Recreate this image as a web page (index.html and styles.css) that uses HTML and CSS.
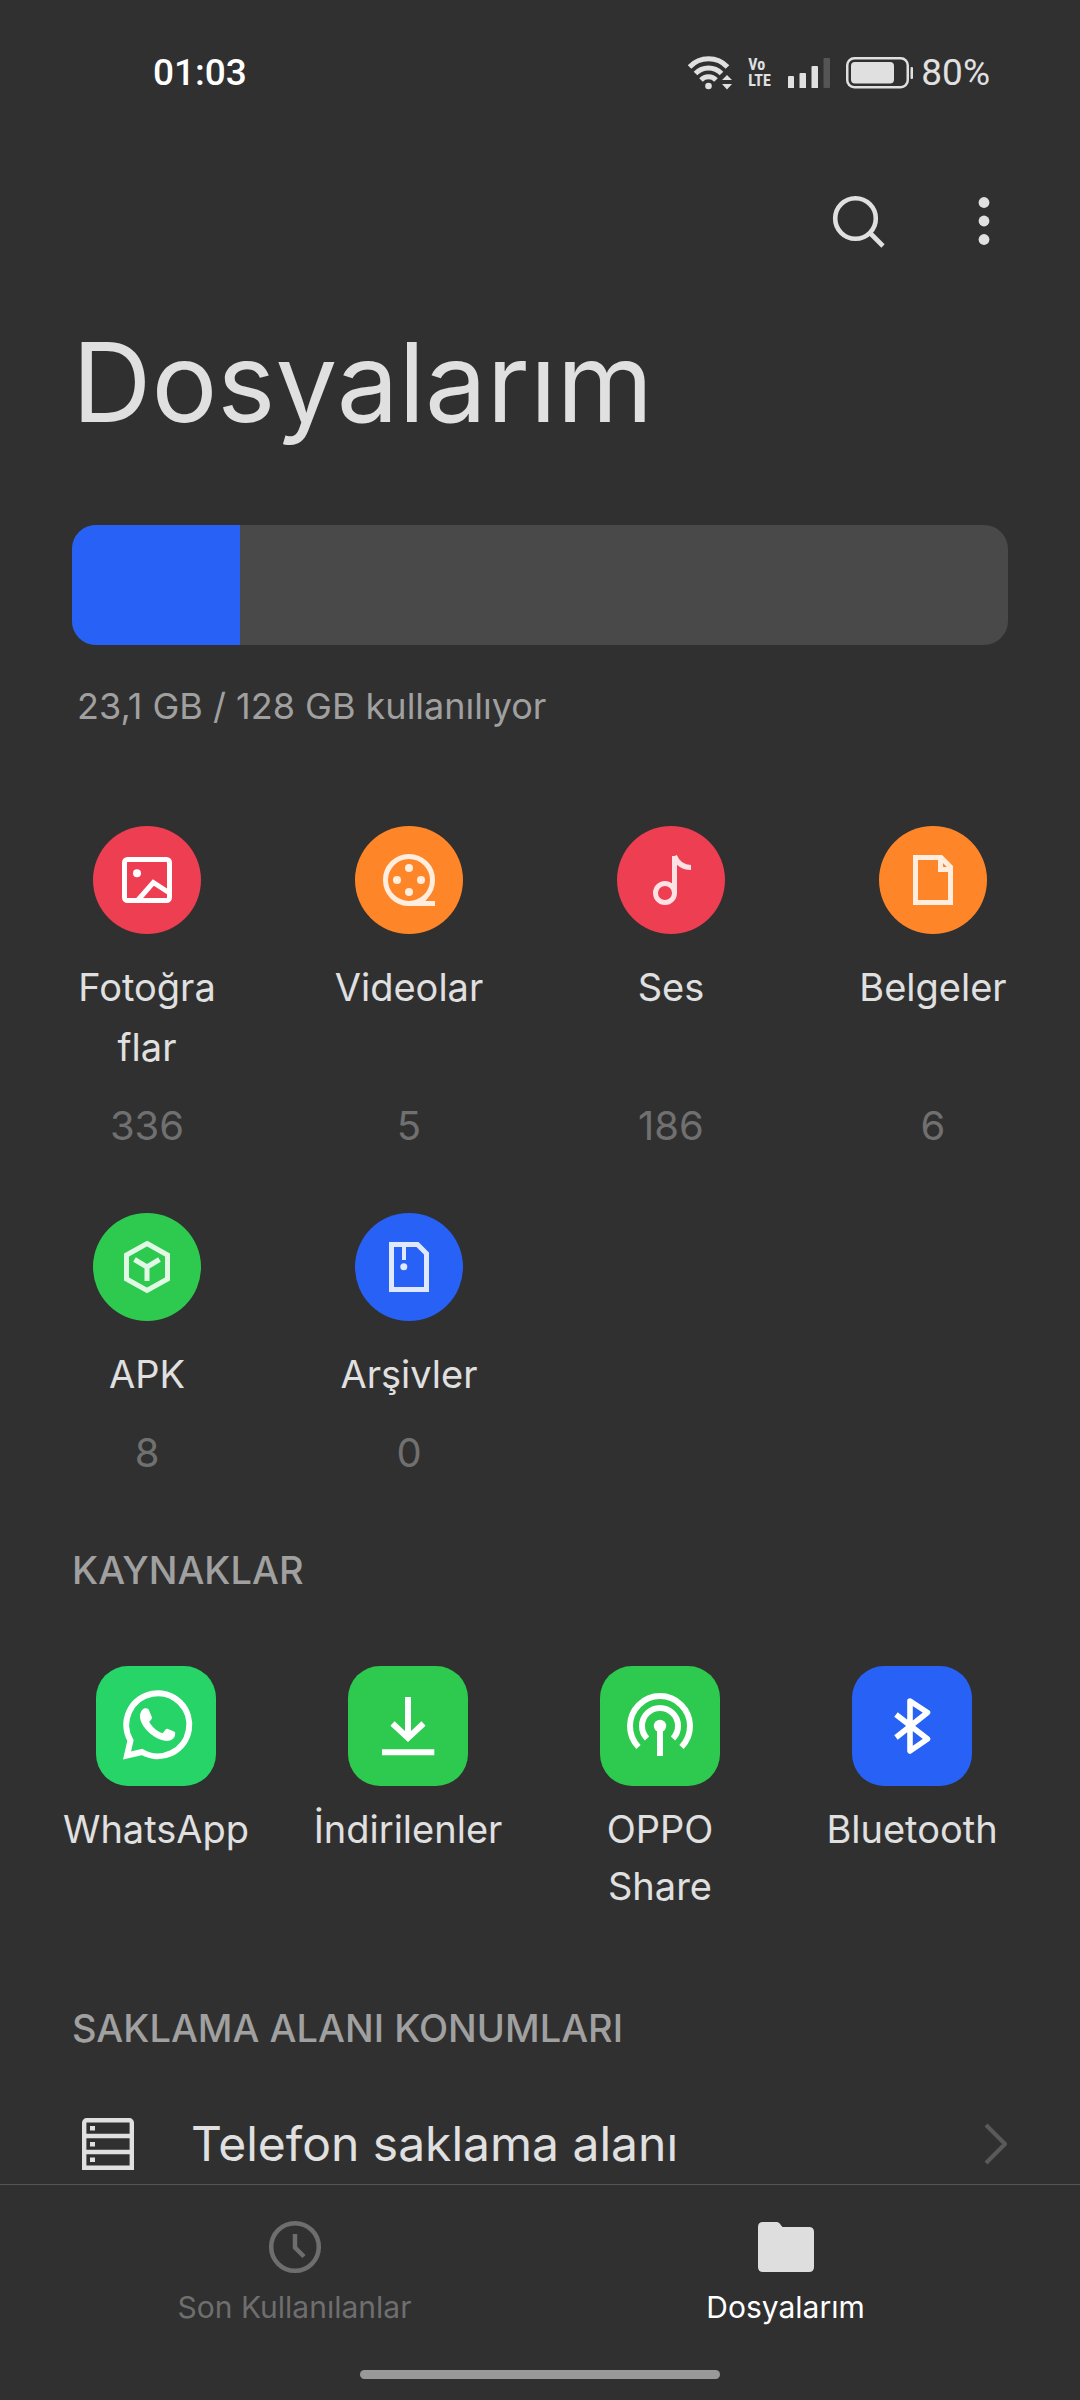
FILE: index.html
```html
<!DOCTYPE html>
<html lang="tr">
<head>
  <meta charset="utf-8">
  <meta name="viewport" content="width=device-width, initial-scale=1">
  <title>Dosyalarım</title>
  <link rel="stylesheet" href="styles.css">
</head>
<body>
  <header class="status">
    <time class="status-time">01:03</time>
    <div class="status-icons">
      <svg class="wifi" width="45" height="36" viewBox="0 0 45 36" aria-hidden="true">
        <g fill="none" stroke="currentColor" stroke-width="5">
          <path d="M1.5 12A26 26 0 0 1 39.5 12"/>
          <path d="M7.5 18.5A18 18 0 0 1 33.5 18.5"/>
          <path d="M13 25A10.500 10.500 0 0 1 28 25"/>
        </g>
        <circle cx="20.500" cy="31" r="3.300" fill="currentColor"/>
        <path fill="currentColor" d="M34 25L39 20L44 25ZM34 29H44L39 34.500Z"/>
      </svg>
      <span class="volte"><span>Vo</span><span>LTE</span></span>
      <svg class="signal" width="43" height="30" viewBox="0 0 43 30" aria-hidden="true">
        <path fill="currentColor" d="M1 19a1 1 0 0 1 1-1h4a1 1 0 0 1 1 1v11H1zM12.500 16a1 1 0 0 1 1-1h4.500a1 1 0 0 1 1 1v14h-6.500zM24.500 9a1 1 0 0 1 1-1h4.500a1 1 0 0 1 1 1v21h-6.500z"/>
        <rect x="36.500" width="6.500" height="30" rx="1" fill="#555"/>
      </svg>
      <svg class="battery" width="68" height="32" viewBox="0 0 68 32" aria-hidden="true">
        <rect x="1.250" y="1.250" width="60.500" height="29" rx="7" fill="none" stroke="currentColor" stroke-width="2.500"/>
        <rect x="5" y="5" width="43" height="21.500" rx="4" fill="currentColor"/>
        <rect x="64.500" y="10" width="2.500" height="12" rx="1" fill="currentColor"/>
      </svg>
      <span class="status-level">80%</span>
    </div>
  </header>

  <div class="toolbar">
    <button class="tool" type="button" aria-label="Ara">
      <svg width="56" height="56" viewBox="0 0 56 56" aria-hidden="true">
        <g fill="none" stroke="currentColor" stroke-width="4.600">
          <circle cx="25.500" cy="25.500" r="20.300"/>
          <path d="M39.500 39.500L53 53"/>
        </g>
      </svg>
    </button>
    <button class="tool" type="button" aria-label="Diğer seçenekler">
      <svg width="56" height="56" viewBox="0 0 56 56" fill="currentColor" aria-hidden="true">
        <circle cx="28" cy="9.500" r="5.400"/><circle cx="28" cy="28" r="5.400"/><circle cx="28" cy="46.500" r="5.400"/>
      </svg>
    </button>
  </div>

  <main class="content">
    <h1 class="title">Dosyalarım</h1>

    <div class="usage-bar"><div class="usage-fill" style="width: 18%"></div></div>
    <p class="usage-text">23,1 GB / 128 GB kullanılıyor</p>

    <nav class="categories" aria-label="Kategoriler">
      <a class="category" href="#photos">
        <svg class="disc red" viewBox="0 0 108 108" aria-hidden="true">
          <g fill="none" stroke="#fff" stroke-width="5">
            <rect x="31.500" y="33.500" width="45" height="41" rx="3"/>
            <path d="M45 74L60.300 56.500L76.500 67"/>
          </g>
          <circle cx="44" cy="47.300" r="4" fill="#fff"/>
        </svg>
        <span class="category-name">Fotoğra<wbr>flar</span>
        <span class="category-count">336</span>
      </a>
      <a class="category" href="#videos">
        <svg class="disc orange" viewBox="0 0 108 108" aria-hidden="true">
          <g fill="none" stroke="#ffeee0" stroke-width="5">
            <circle cx="54" cy="54" r="23.500"/>
            <path d="M54 77.500H80"/>
          </g>
          <path d="M66 76L74 70L70 75.500Z" fill="#ffeee0"/>
          <g fill="#ffeee0"><circle cx="54" cy="42" r="4"/><circle cx="42" cy="54" r="4"/><circle cx="66" cy="54" r="4"/><circle cx="54" cy="66" r="4"/></g>
        </svg>
        <span class="category-name">Videolar</span>
        <span class="category-count">5</span>
      </a>
      <a class="category" href="#audio">
        <svg class="disc red" viewBox="0 0 108 108" aria-hidden="true">
          <g fill="none" stroke="#fde2e5" stroke-width="5">
            <circle cx="48" cy="67" r="9.500"/>
            <path d="M57.500 67V30M57.500 30C60.500 37.500 66 41.500 74 41.500"/>
          </g>
        </svg>
        <span class="category-name">Ses</span>
        <span class="category-count">186</span>
      </a>
      <a class="category" href="#documents">
        <svg class="disc orange" viewBox="0 0 108 108" aria-hidden="true">
          <g fill="none" stroke="#ffeee0" stroke-width="5">
            <path d="M36.500 31.500H62L71.500 41V76.500H36.500Z"/>
            <path d="M61.500 31.500V43.500H72"/>
          </g>
        </svg>
        <span class="category-name">Belgeler</span>
        <span class="category-count">6</span>
      </a>
      <a class="category" href="#apk">
        <svg class="disc green" viewBox="0 0 108 108" aria-hidden="true">
          <g fill="none" stroke="#e0f8e4" stroke-width="5">
            <path d="M54 30.500L74.500 42V66L54 77.500L33.500 66V42Z"/>
            <path d="M41.500 46.500L54 54L66.500 46.500M54 53V68"/>
          </g>
        </svg>
        <span class="category-name">APK</span>
        <span class="category-count">8</span>
      </a>
      <a class="category" href="#archives">
        <svg class="disc blue" viewBox="0 0 108 108" aria-hidden="true">
          <g fill="none" stroke="#dfe8fe" stroke-width="5">
            <path d="M36.500 31.500H62.500L71.500 40.500V76.500H36.500Z"/>
            <path d="M49 32V47" stroke-width="4"/>
          </g>
          <circle cx="48.800" cy="53.700" r="3.500" fill="#dfe8fe"/>
        </svg>
        <span class="category-name">Arşivler</span>
        <span class="category-count">0</span>
      </a>
    </nav>

    <h2 class="section-title">KAYNAKLAR</h2>
    <nav class="sources" aria-label="Kaynaklar">
      <a class="source" href="#whatsapp">
        <svg class="tile whatsapp" viewBox="0 0 120 120" aria-hidden="true">
          <path fill="none" stroke="#fff" stroke-width="6" d="M34.500 74.500A31.500 31.500 0 1 1 46 86L31 89.500Z"/>
          <path fill="#fff" d="M49 42.300C51.500 42 52.300 42.800 52.900 44L55.800 51C56.300 52.300 55.600 53.200 53.200 55.800C56 61 61 65.500 66.700 67.200L69.600 63.400C70.300 62.500 71 62.500 72 62.900L78 65.600C79.200 66.200 79.300 66.800 79.100 68.500C78.600 73 74 75.600 69 74.800C57 72.800 44 60 44 50.500C44 46 46.500 42.600 49 42.300Z"/>
        </svg>
        <span class="source-name">WhatsApp</span>
      </a>
      <a class="source" href="#downloads">
        <svg class="tile green" viewBox="0 0 120 120" aria-hidden="true">
          <path fill="none" stroke="#fff" stroke-width="6" d="M60 31V73M44.500 57.500L60 72L75.500 57.500M34 86.300H86.300"/>
        </svg>
        <span class="source-name">İndirilenler</span>
      </a>
      <a class="source" href="#oppo-share">
        <svg class="tile green" viewBox="0 0 120 120" aria-hidden="true">
          <path fill="none" stroke="#fff" stroke-width="6" d="M38.500 81A30 30 0 1 1 81.500 81M47 72.500A18 18 0 1 1 73 72.500M60 60V90"/>
          <circle cx="60" cy="60" r="6.200" fill="#fff"/>
        </svg>
        <span class="source-name">OPPO Share</span>
      </a>
      <a class="source" href="#bluetooth">
        <svg class="tile blue" viewBox="0 0 120 120" aria-hidden="true">
          <path fill="none" stroke="#fff" stroke-width="5.600" stroke-linejoin="round" d="M44 48.500L75.500 73L58 85V35L75.500 46.500L44 71.500"/>
        </svg>
        <span class="source-name">Bluetooth</span>
      </a>
    </nav>

    <h2 class="section-title storage-title">SAKLAMA ALANI KONUMLARI</h2>
    <a class="location" href="#phone-storage">
      <svg width="52" height="52" viewBox="0 0 52 52" aria-hidden="true">
        <path fill="none" stroke="currentColor" stroke-width="4.400" d="M2.200 49.800V4.700A2.500 2.500 0 0 1 4.700 2.200H47.300A2.500 2.500 0 0 1 49.800 4.700V49.800ZM2 18H50M2 34H50"/>
        <path fill="currentColor" d="M8 8h5v4.500H8zM8 24h5v4.500H8zM8 39.500h5V44H8z"/>
      </svg>
      <span class="location-name">Telefon saklama alanı</span>
      <svg class="chevron" width="24" height="42" viewBox="0 0 24 42" aria-hidden="true">
        <path fill="none" stroke="currentColor" stroke-width="4" stroke-linejoin="round" d="M2 2L21 21L2 40"/>
      </svg>
    </a>
  </main>

  <footer class="bottom">
    <nav class="tabs" aria-label="Sekmeler">
      <a class="tab" href="#recent">
        <svg width="56" height="56" viewBox="0 0 56 56" aria-hidden="true">
          <g fill="none" stroke="currentColor" stroke-width="4.500">
            <circle cx="28" cy="28" r="23.800"/>
            <path d="M28 15V28.500L37 37.500"/>
          </g>
        </svg>
        <span>Son Kullanılanlar</span>
      </a>
      <a class="tab active" href="#files" aria-current="page">
        <svg width="56" height="56" viewBox="0 0 56 56" aria-hidden="true">
          <path fill="#dedede" d="M5 3H18.500Q20 3 21.200 4L24.500 8H51Q56 8 56 13V48Q56 53 51 53H5Q0 53 0 48V8Q0 3 5 3Z"/>
        </svg>
        <span>Dosyalarım</span>
      </a>
    </nav>
    <div class="home-bar"></div>
  </footer>
</body>
</html>
```
FILE: styles.css
```css
* {
  box-sizing: border-box;
}

body {
  display: flex;
  flex-direction: column;
  min-height: 100vh;
  margin: 0;
  background: #303030;
  color: #e0e0e0;
  font-family: Inter, "Liberation Sans", sans-serif;
  font-size: 40px;
  line-height: 60px;
}

a {
  color: inherit;
  text-decoration: none;
}

h1, h2, p {
  margin: 0;
}

svg {
  display: block;
  flex: none;
}

/* Status bar */
.status {
  display: flex;
  align-items: center;
  justify-content: space-between;
  height: 144px;
  padding: 2px 90px 0 153px;
  font-family: Roboto, sans-serif;
  font-size: 37px;
}

.status-time {
  color: #fff;
  font-weight: 500;
}

.status-icons {
  display: flex;
  align-items: center;
}

.wifi {
  margin-right: 15px;
}

.volte {
  display: flex;
  flex-direction: column;
  width: 24px;
  margin-right: 15px;
  font-family: "Liberation Sans Narrow", "Roboto Condensed", Roboto, sans-serif;
  font-size: 16px;
  font-weight: 700;
  line-height: 16px;
}

.signal {
  margin-right: 16px;
}

.battery {
  margin-right: 7px;
}

/* Toolbar */
.toolbar {
  display: flex;
  align-items: center;
  justify-content: flex-end;
  gap: 70px;
  height: 154px;
  padding-right: 68px;
}

.tool {
  padding: 0;
  border: 0;
  background: none;
  color: inherit;
}

/* Content */
.content {
  padding: 14px 72px 0;
}

.title {
  font-size: 110px;
  font-weight: 400;
  line-height: 140px;
}

.usage-bar {
  height: 120px;
  margin-top: 73px;
  border-radius: 24px;
  overflow: hidden;
  background: #494949;
}

.usage-fill {
  height: 100%;
  background: #2861f5;
}

.usage-text {
  margin-top: 31px;
  padding-left: 5px;
  color: #a0a0a0;
  font-size: 36px;
}

.categories {
  display: grid;
  grid-template-columns: repeat(4, 150px);
  justify-content: space-between;
  row-gap: 57px;
  margin-top: 90px;
  text-align: center;
}

.category {
  display: flex;
  flex-direction: column;
  align-items: center;
}

.disc {
  width: 108px;
  height: 108px;
  margin-bottom: 23px;
  border-radius: 50%;
}

.category-name {
  width: 100%;
  font-size: 38px;
}

.category-count {
  margin-top: auto;
  padding-top: 19px;
  color: #707070;
}

.red { background: #ed3e52; }
.orange { background: #ff8628; }
.green { background: #2ec94f; }
.blue { background: #2861f5; }
.whatsapp { background: #27d468; }

.section-title {
  margin-top: 57px;
  color: #a0a0a0;
  font-size: 38px;
  font-weight: 500;
}

.sources {
  display: grid;
  grid-template-columns: repeat(4, 1fr);
  margin: 66px -30px 0 -42px;
  text-align: center;
}

.source {
  display: flex;
  flex-direction: column;
  align-items: center;
}

.tile {
  width: 120px;
  height: 120px;
  margin-bottom: 15px;
  border-radius: 32px;
}

.source-name {
  max-width: 204px;
  font-size: 38px;
  line-height: 57px;
}

.storage-title {
  margin-top: 83px;
}

.location {
  display: flex;
  align-items: center;
  margin-top: 50px;
  padding-left: 10px;
}

.location-name {
  flex: 1;
  padding-left: 57px;
  font-size: 48px;
  line-height: 72px;
}

.chevron {
  color: #5a5a5a;
}

/* Bottom bar */
.bottom {
  position: sticky;
  bottom: 0;
  margin-top: auto;
  padding: 34px 49px 21px;
  border-top: 1px solid #555;
  background: #303030;
}

.tabs {
  display: grid;
  grid-template-columns: 1fr 1fr;
}

.tab {
  display: flex;
  flex-direction: column;
  align-items: center;
  gap: 8px;
  color: #6e6e6e;
  font-size: 30px;
  line-height: 48px;
}

.tab.active {
  color: #fff;
}

.home-bar {
  width: 360px;
  height: 9px;
  margin: 39px auto 0;
  border-radius: 5px;
  background: #999;
}
```
